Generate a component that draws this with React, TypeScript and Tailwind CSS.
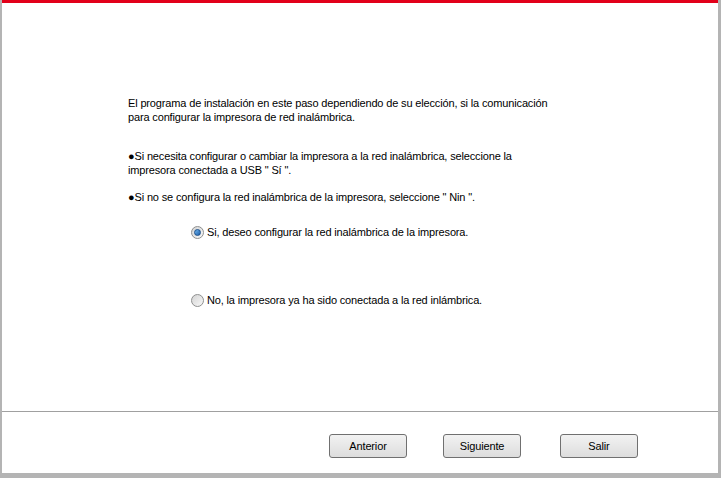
import type { ReactNode } from 'react'

function Radio({ checked, children }: { checked?: boolean; children: ReactNode }) {
  return (
    <label className="flex items-center gap-[3px]">
      <span className="flex h-[13px] w-[13px] items-center justify-center rounded-full border border-[#8e8f8f] bg-gradient-to-br from-[#d4d4d4] to-[#f8f8f8]">
        {checked && (
          <span className="h-[7px] w-[7px] rounded-full border border-[#1a4f8c] bg-gradient-to-br from-[#6fb6f0] to-[#1d5fa8]" />
        )}
      </span>
      <span>{children}</span>
    </label>
  )
}

function WizardButton({ children, className = '' }: { children: ReactNode; className?: string }) {
  return (
    <button
      className={`h-[24px] w-[78px] rounded-[3px] border border-[#707070] bg-gradient-to-b from-[#f2f2f2] to-[#dddddd] text-[11px] text-black ${className}`}
    >
      {children}
    </button>
  )
}

export default function App() {
  return (
    <div className="flex h-[478px] w-[721px] flex-col border-b-[5px] border-l-2 border-r-[3px] border-[#b4b4b4] bg-white font-['Liberation_Sans',Arial,sans-serif] text-[11px] leading-[14px] tracking-[-0.15px] text-black">
      <div className="h-[3px] bg-[#e2001a]" />

      <div className="flex flex-1 flex-col pl-[126px] pt-[93px]">
        <p>
          El programa de instalación en este paso dependiendo de su elección, si la comunicación
          <br />
          para configurar la impresora de red inalámbrica.
        </p>
        <p className="mt-[25px]">
          ●Si necesita configurar o cambiar la impresora a la red inalámbrica, seleccione la
          <br />
          impresora conectada a USB " Sí ".
        </p>
        <p className="mt-[13px]">●Si no se configura la red inalámbrica de la impresora, seleccione " Nin ".</p>

        <div className="ml-[63px] mt-[21px] flex flex-col gap-[54px]">
          <Radio checked>Si, deseo configurar la red inalámbrica de la impresora.</Radio>
          <Radio>No, la impresora ya ha sido conectada a la red inlámbrica.</Radio>
        </div>
      </div>

      <div className="border-t border-[#a0a0a0]" />

      <div className="flex h-[61px] items-start pl-[327px] pt-[22px]">
        <WizardButton>Anterior</WizardButton>
        <WizardButton className="ml-[36px]">Siguiente</WizardButton>
        <WizardButton className="ml-[39px]">Salir</WizardButton>
      </div>
    </div>
  )
}
